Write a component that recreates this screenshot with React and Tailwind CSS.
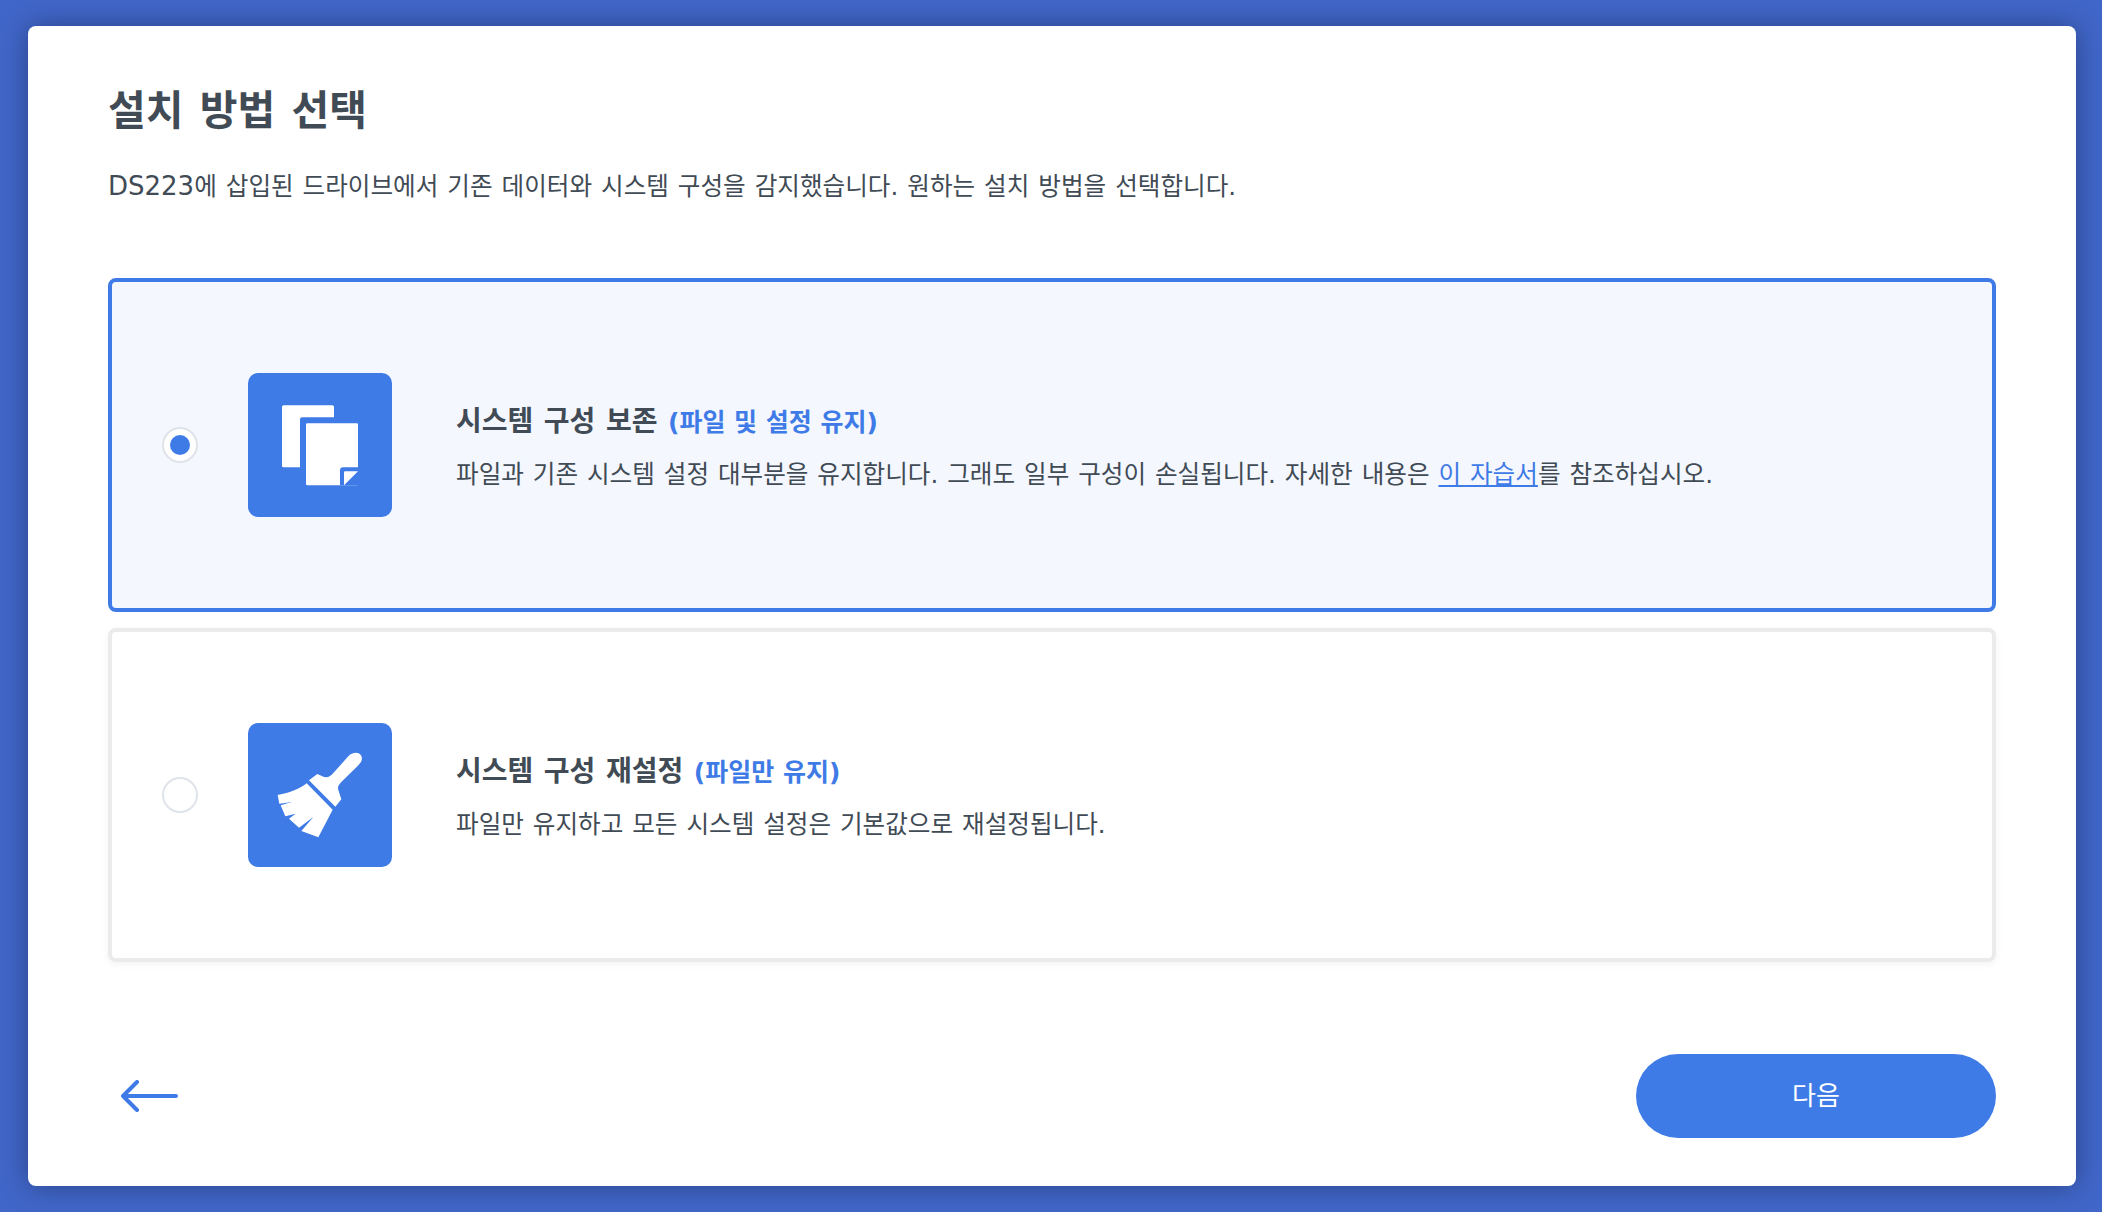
import React from "react";

const FONT = "font-['DejaVu_Sans','Noto_Sans_CJK_KR',sans-serif]";

function CopyIcon() {
  return (
    <svg viewBox="444 98 432 432" className="w-full h-full">
      <rect x="546" y="195" width="156" height="186" rx="5" fill="#fff" />
      <rect x="600" y="231" width="192" height="222" rx="6" fill="#3f7be6" />
      <rect x="618" y="249" width="156" height="186" rx="4" fill="#fff" />
      <path d="M720 435V390a9 9 0 0 1 9-9H774V435Z" fill="#3f7be6" />
      <path d="M735 393H774L732 435V396a3 3 0 0 1 3-3Z" fill="#fff" />
    </svg>
  );
}

function BroomIcon() {
  return (
    <svg viewBox="444 98 432 432" className="w-full h-full">
      <path
        d="M627 270L652 251L672 260C685 262 692 258 700 248L745 198C755 186 775 183 783 195C790 207 782 218 773 227L724 275C714 285 712 292 716 302L724 327L706 349Z"
        fill="#fff"
      />
      <path
        d="M620 279L698 358L655 441L604 422L640 380L597 412L567 385L587 370L556 378L542 345L575 335L538 340L533 314C570 308 600 295 620 279Z"
        fill="#fff"
      />
    </svg>
  );
}

function Option({ selected, icon, title, note, children }) {
  return (
    <div
      className={
        "h-[334px] rounded-lg border-4 flex items-center pl-[50px] " +
        (selected
          ? "border-[#3f7be6] bg-[#f4f7fe]"
          : "border-[#ebebeb] bg-white shadow-[0_2px_8px_rgba(0,0,0,0.05)]")
      }
    >
      <div className="w-9 h-9 rounded-full border-2 border-[#dfe3ea] bg-white flex items-center justify-center shrink-0">
        {selected && <div className="w-5 h-5 rounded-full bg-[#3f7be6]" />}
      </div>
      <div className="w-36 h-36 ml-[50px] rounded-[10px] bg-[#3f7be6] shrink-0">{icon}</div>
      <div className="ml-[64px] pt-[6px]">
        <div className="text-[28px] leading-[40px] font-bold text-[#414b55] [word-spacing:0.8px]">
          {title} <span className="text-[25px] text-[#3f7be6] [word-spacing:0px]">{note}</span>
        </div>
        <div className="mt-3 text-[24.6px] leading-[40px] text-[#414b55] [word-spacing:1.1px]">{children}</div>
      </div>
    </div>
  );
}

export default function App() {
  return (
    <div className={"w-full h-screen bg-[#4066c9] pl-[28px] pr-[26px] py-[26px] " + FONT}>
      <div className="h-full bg-white rounded-lg shadow-[0_0_28px_rgba(0,0,0,0.35)] px-20 pt-[57px] flex flex-col">
        <h1 className="text-[41px] leading-[56px] font-bold text-[#414b55] [word-spacing:2px]">설치 방법 선택</h1>
        <p className="mt-[28px] text-[24.6px] h-10 leading-[40px] text-[#414b55] [word-spacing:1.15px]">
          <span className="text-[26px] leading-none">DS223</span>에 삽입된 드라이브에서 기존 데이터와 시스템 구성을 감지했습니다. 원하는 설치 방법을 선택합니다.
        </p>
        <div className="mt-[71px] flex flex-col gap-4">
          <Option selected icon={<CopyIcon />} title="시스템 구성 보존" note="(파일 및 설정 유지)">
            파일과 기존 시스템 설정 대부분을 유지합니다. 그래도 일부 구성이 손실됩니다. 자세한 내용은{" "}
            <a className="text-[#3f7be6] underline">이 자습서</a>를 참조하십시오.
          </Option>
          <Option icon={<BroomIcon />} title="시스템 구성 재설정" note="(파일만 유지)">
            파일만 유지하고 모든 시스템 설정은 기본값으로 재설정됩니다.
          </Option>
        </div>
        <div className="mt-[92px] flex items-center justify-between">
          <svg viewBox="0 0 60 32" className="w-[60px] h-8 ml-3" fill="none" stroke="#3f7be6" strokeWidth="4" strokeLinecap="round" strokeLinejoin="round">
            <path d="M3 16H56M17 2L3 16L17 30" />
          </svg>
          <button className="w-[360px] h-[84px] rounded-full bg-[#3f7be6] text-white text-[26px]">다음</button>
        </div>
      </div>
    </div>
  );
}
